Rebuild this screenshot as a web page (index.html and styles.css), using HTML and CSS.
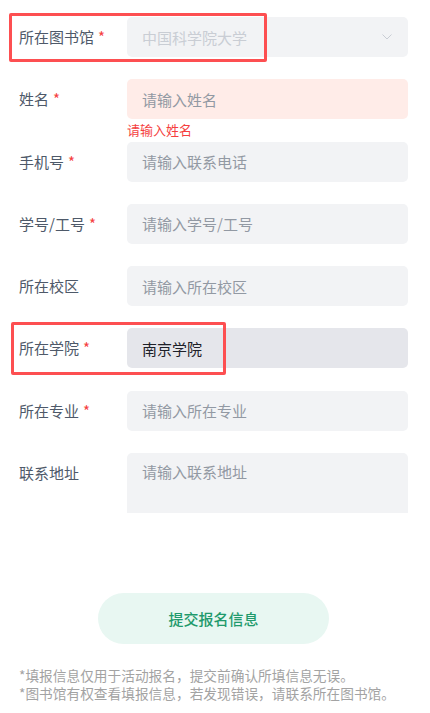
FILE: index.html
```html
<!DOCTYPE html>
<html lang="zh-CN">
<head>
<meta charset="utf-8">
<title>活动报名</title>
<link rel="stylesheet" href="styles.css">
</head>
<body>
<main class="page">
  <form class="form">
    <div class="item">
      <div class="label">所在图书馆<span class="req">*</span></div>
      <div class="control">
        <div class="field select disabled">
          <span>中国科学院大学</span>
          <svg class="chev" width="10" height="6" viewBox="0 0 10 6"><path d="M0.5 0.5 L5 5 L9.5 0.5" fill="none" stroke="#c9cdd4" stroke-width="1"/></svg>
        </div>
        <div class="msg"></div>
      </div>
    </div>
    <div class="item">
      <div class="label">姓名<span class="req">*</span></div>
      <div class="control">
        <input class="field error" placeholder="请输入姓名">
        <div class="msg">请输入姓名</div>
      </div>
    </div>
    <div class="item">
      <div class="label">手机号<span class="req">*</span></div>
      <div class="control">
        <input class="field" placeholder="请输入联系电话">
        <div class="msg"></div>
      </div>
    </div>
    <div class="item">
      <div class="label">学号/工号<span class="req">*</span></div>
      <div class="control">
        <input class="field" placeholder="请输入学号/工号">
        <div class="msg"></div>
      </div>
    </div>
    <div class="item">
      <div class="label">所在校区</div>
      <div class="control">
        <input class="field" placeholder="请输入所在校区">
        <div class="msg"></div>
      </div>
    </div>
    <div class="item">
      <div class="label">所在学院<span class="req">*</span></div>
      <div class="control">
        <input class="field hover" value="南京学院">
        <div class="msg"></div>
      </div>
    </div>
    <div class="item">
      <div class="label">所在专业<span class="req">*</span></div>
      <div class="control">
        <input class="field" placeholder="请输入所在专业">
        <div class="msg"></div>
      </div>
    </div>
    <div class="item">
      <div class="label">联系地址</div>
      <div class="control">
        <textarea class="field area" placeholder="请输入联系地址"></textarea>
      </div>
    </div>

    <div class="actions">
      <button type="button" class="submit">提交报名信息</button>
    </div>

    <div class="notes">
      <p>*填报信息仅用于活动报名，提交前确认所填信息无误。</p>
      <p>*图书馆有权查看填报信息，若发现错误，请联系所在图书馆。</p>
    </div>

    <div class="mark mark-lib"></div>
    <div class="mark mark-college"></div>
  </form>
</main>
</body>
</html>
```

FILE: styles.css
```css
* { box-sizing: border-box; }
html, body {
  margin: 0;
  padding: 0;
  background: #ffffff;
}
body {
  font-family: "Noto Sans CJK SC", "Noto Sans", sans-serif;
  color: #4e5969;
}
.page {
  width: 430px;
}
.form {
  position: relative;
  padding: 17px 22px 0 19px;
  margin: 0;
}
.item {
  display: grid;
  grid-template-columns: 108px 1fr;
}
.label {
  font-size: 15px;
  line-height: 40px;
  height: 40px;
  color: #4e5969;
  white-space: nowrap;
}
.req {
  color: #f53f3f;
  margin-left: 4px;
}
.control {
  display: flex;
  flex-direction: column;
}
.field {
  display: block;
  width: 100%;
  height: 40px;
  border: none;
  outline: none;
  border-radius: 5px;
  background: #f2f3f5;
  padding: 0 15px;
  font-family: inherit;
  font-size: 15px;
  color: #1d2129;
  margin: 0;
}
.field::placeholder {
  color: #9299a3;
  opacity: 1;
}
.select {
  display: flex;
  align-items: center;
  justify-content: space-between;
  padding-right: 16px;
}
.disabled {
  background: #f2f3f5;
  color: #c9cdd4;
}
.chev {
  display: block;
}
.error {
  background: #ffece8;
}
.hover {
  background: #e5e6eb;
}
.msg {
  height: 22.3px;
  font-size: 13px;
  line-height: 22px;
  color: #f53f3f;
}
.area {
  height: 60px;
  resize: none;
  padding: 8px 15px;
  line-height: 22px;
  border-radius: 5px 5px 0 0;
}
.actions {
  display: flex;
  justify-content: center;
  margin-top: 80px;
}
.submit {
  width: 231px;
  height: 51px;
  border: none;
  border-radius: 26px;
  background: #e8f7f2;
  color: #1f9a6c;
  font-family: inherit;
  font-size: 15px;
  font-weight: 500;
  padding: 0;
}
.notes {
  margin-top: 22px;
  font-size: 13.7px;
  line-height: 18px;
  color: #a3a3a3;
}
.notes p {
  margin: 0;
  white-space: nowrap;
}
.mark {
  position: absolute;
  border: 3px solid #fd4f51;
  border-radius: 2px;
  pointer-events: none;
}
.mark-lib {
  left: 9px;
  top: 13px;
  width: 258px;
  height: 49px;
}
.mark-college {
  left: 11px;
  top: 322px;
  width: 215px;
  height: 53px;
}
```
